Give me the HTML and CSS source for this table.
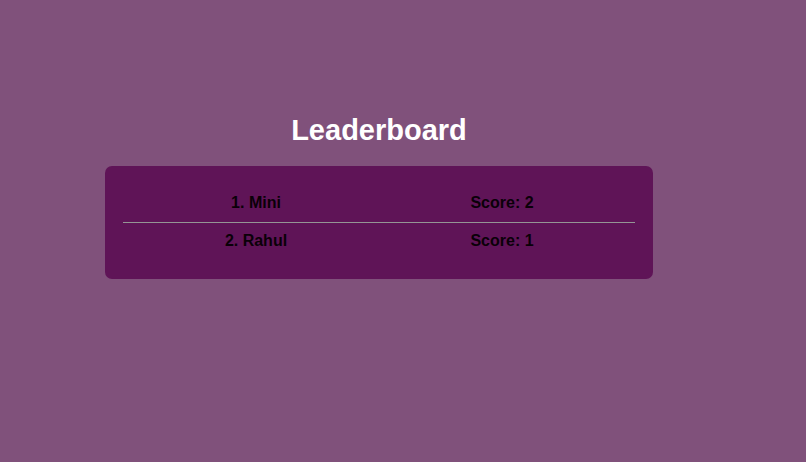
FILE: index.html
```html
<!DOCTYPE html>
<html>
<head>
<meta charset="utf-8">
<link rel="stylesheet" href="styles.css">
</head>
<body>
<div class="page">
  <h1 class="title">Leaderboard</h1>
  <div class="board">
    <div class="row first">
      <span class="cell">1. Mini</span>
      <span class="cell">Score: 2</span>
    </div>
    <div class="row second">
      <span class="cell">2. Rahul</span>
      <span class="cell">Score: 1</span>
    </div>
  </div>
</div>
</body>
</html>
```

FILE: styles.css
```css
html, body {
  margin: 0;
  padding: 0;
  height: 100%;
}
body {
  background: #80517b;
  font-family: "Liberation Sans", Arial, sans-serif;
}
.page {
  width: 758px;
  display: flex;
  flex-direction: column;
  align-items: center;
  padding-top: 114px;
}
.title {
  margin: 0 0 19px;
  font-size: 29px;
  line-height: 33px;
  font-weight: bold;
  color: #ffffff;
}
.board {
  width: 548px;
  box-sizing: border-box;
  background: #5f1457;
  border-radius: 7px;
  padding: 18px 18px 19px;
}
.row {
  display: grid;
  grid-template-columns: 1fr 1fr;
  padding: 10px;
  font-size: 16px;
  line-height: 18px;
  font-weight: bold;
  color: #0a0008;
}
.row.first {
  border-bottom: 1px solid #959595;
}
.row.second {
  padding-top: 9px;
}
.cell {
  text-align: center;
}
```
